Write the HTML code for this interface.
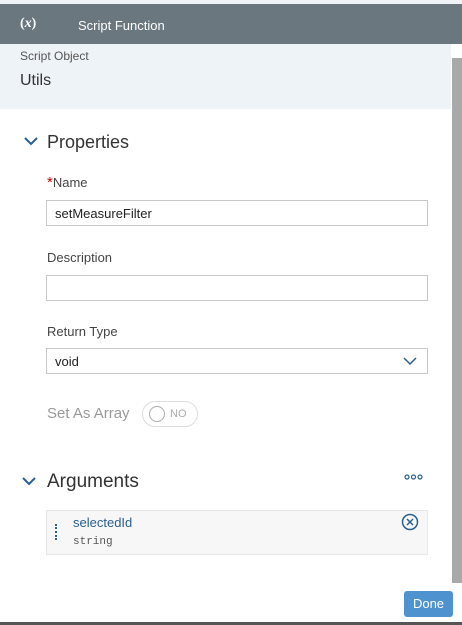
<!DOCTYPE html>
<html><head><style>
*{box-sizing:border-box;margin:0;padding:0}
body{width:462px;height:625px;background:#fff;font-family:"Liberation Sans",sans-serif;position:relative;overflow:hidden;color:#32363a}
.a{position:absolute}
.inp{position:absolute;left:46px;width:382px;height:26px;border:1px solid #c8c8c8;background:#fff;font-size:13px;padding:5px 8px;color:#222}
.lbl{position:absolute;left:47px;font-size:13px;color:#444}
</style></head><body>
<div class="a" style="left:0;top:0;width:462px;height:4px;background:#f0f4f8"></div>
<div class="a" style="left:0;top:4px;width:462px;height:40px;background:#6a777e"></div>
<div class="a" style="left:20px;top:16px;color:#fff;font-family:'Liberation Serif',serif;font-size:14px;font-weight:bold">(<i>x</i>)</div>
<div class="a" style="left:78px;top:18px;color:#fff;font-size:13px">Script Function</div>
<div class="a" style="left:0;top:44px;width:451px;height:65px;background:#eef3f8"></div>
<div class="a" style="left:20px;top:49px;font-size:12px;color:#555">Script Object</div>
<div class="a" style="left:20px;top:72px;font-size:16px;color:#333">Utils</div>
<div class="a" style="left:451px;top:44px;width:11px;height:581px;background:#fff"></div>
<div class="a" style="left:452px;top:58px;width:10px;height:525px;background:#a9a9a9"></div>
<svg class="a" style="left:24px;top:136px" width="14" height="10"><path d="M1 2 L7 8 L13 2" stroke="#2a5f8f" stroke-width="2" fill="none"/></svg>
<div class="a" style="left:47px;top:132px;font-size:18px;color:#333">Properties</div>
<div class="lbl" style="top:174px"><span style="color:#c00;font-size:15px">*</span>Name</div>
<div class="inp" style="top:200px">setMeasureFilter</div>
<div class="lbl" style="top:250px">Description</div>
<div class="inp" style="top:275px"></div>
<div class="lbl" style="top:324px">Return Type</div>
<div class="inp" style="top:348px">void</div>
<svg class="a" style="left:403px;top:356px" width="14" height="10"><path d="M1 2 L7 8 L13 2" stroke="#2a5f8f" stroke-width="1.5" fill="none"/></svg>
<div class="a" style="left:47px;top:405px;font-size:15px;color:#999">Set As Array</div>
<div class="a" style="left:142px;top:401px;width:56px;height:26px;border:1px solid #ddd;border-radius:13px"></div>
<div class="a" style="left:149px;top:406px;width:16px;height:16px;border:1.5px solid #aaa;border-radius:50%"></div>
<div class="a" style="left:170px;top:408px;font-size:11px;color:#aaa">NO</div>
<svg class="a" style="left:22px;top:476px" width="14" height="10"><path d="M1 2 L7 8 L13 2" stroke="#2a5f8f" stroke-width="2" fill="none"/></svg>
<div class="a" style="left:47px;top:471px;font-size:19px;color:#333">Arguments</div>
<svg class="a" style="left:404px;top:474px" width="20" height="6"><circle cx="3" cy="3" r="2" stroke="#2a5f8f" stroke-width="1.2" fill="none"/><circle cx="9.5" cy="3" r="2" stroke="#2a5f8f" stroke-width="1.2" fill="none"/><circle cx="16" cy="3" r="2" stroke="#2a5f8f" stroke-width="1.2" fill="none"/></svg>
<div class="a" style="left:46px;top:510px;width:382px;height:45px;background:#f7f7f7;border:1px solid #e8e8e8"></div>
<div class="a" style="left:55px;top:524px;width:3px;height:16px;border-left:2.5px dotted #2a5f8f"></div>
<div class="a" style="left:73px;top:515px;font-size:13px;color:#2a5f8f">selectedId</div>
<div class="a" style="left:73px;top:536px;font-size:11px;color:#555;font-family:'Liberation Mono',monospace">string</div>
<svg class="a" style="left:401px;top:513px" width="18" height="18"><circle cx="9" cy="9" r="7.5" stroke="#2a5f8f" stroke-width="1.5" fill="none"/><path d="M6 6 L12 12 M12 6 L6 12" stroke="#2a5f8f" stroke-width="1.5"/></svg>
<div class="a" style="left:404px;top:591px;width:49px;height:26px;background:#4f92d0;border-radius:3px;color:#fff;font-size:13px;text-align:center;line-height:26px">Done</div>
<div class="a" style="left:0;top:622px;width:462px;height:3px;background:#555"></div>
</body></html>
